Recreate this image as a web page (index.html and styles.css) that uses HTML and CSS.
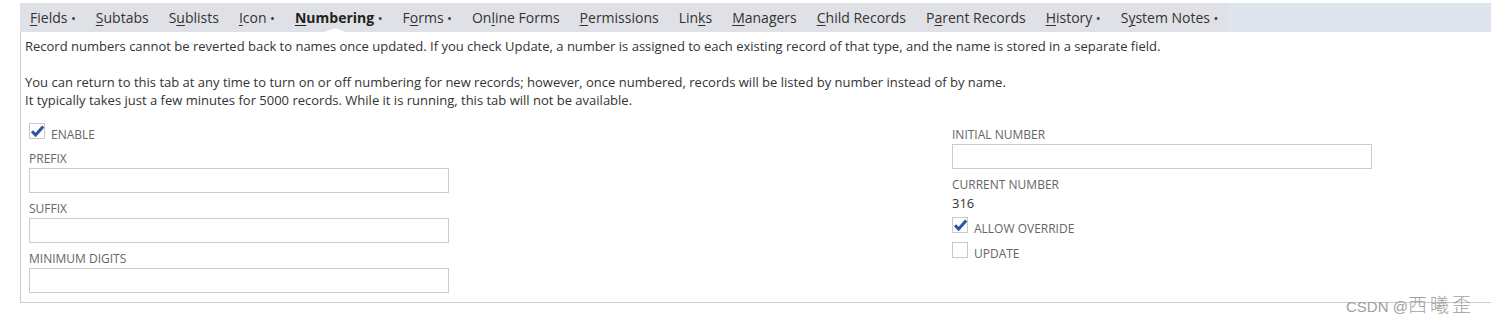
FILE: index.html
```html
<!DOCTYPE html>
<html>
<head>
<meta charset="utf-8">
<link rel="stylesheet" href="styles.css">
</head>
<body>
<div class="page">
  <div class="tabbar">
    <ul class="tabs">
      <li class="tab"><u>F</u>ields<span class="dot">•</span></li>
      <li class="tab"><u>S</u>ubtabs</li>
      <li class="tab">S<u>u</u>blists</li>
      <li class="tab"><u>I</u>con<span class="dot">•</span></li>
      <li class="tab active"><u>N</u>umbering<span class="dot">•</span></li>
      <li class="tab">F<u>o</u>rms<span class="dot">•</span></li>
      <li class="tab">On<u>l</u>ine Forms</li>
      <li class="tab"><u>P</u>ermissions</li>
      <li class="tab">Lin<u>k</u>s</li>
      <li class="tab"><u>M</u>anagers</li>
      <li class="tab"><u>C</u>hild Records</li>
      <li class="tab">P<u>a</u>rent Records</li>
      <li class="tab"><u>H</u>istory<span class="dot">•</span></li>
      <li class="tab">S<u>y</u>stem Notes<span class="dot">•</span></li>
    </ul>
  </div>
  <div class="panel">
    <p class="info">Record numbers cannot be reverted back to names once updated. If you check Update, a number is assigned to each existing record of that type, and the name is stored in a separate field.<br><br>You can return to this tab at any time to turn on or off numbering for new records; however, once numbered, records will be listed by number instead of by name.<br>It typically takes just a few minutes for 5000 records. While it is running, this tab will not be available.</p>
    <div class="form">
      <div class="col left">
        <div class="check-row enable">
          <span class="box checked"><svg viewBox="0 0 16 16" width="16" height="16"><path d="M3 8.3 L6.6 12 L14.2 3.6" fill="none" stroke="#28579c" stroke-width="3" stroke-linejoin="miter" stroke-linecap="butt"/></svg></span>
          <span class="label">Enable</span>
        </div>
        <div class="field">
          <div class="label">Prefix</div>
          <div class="input"></div>
        </div>
        <div class="field">
          <div class="label">Suffix</div>
          <div class="input"></div>
        </div>
        <div class="field">
          <div class="label">Minimum Digits</div>
          <div class="input"></div>
        </div>
      </div>
      <div class="col right">
        <div class="field first">
          <div class="label">Initial Number</div>
          <div class="input"></div>
        </div>
        <div class="field">
          <div class="label">Current Number</div>
          <div class="value">316</div>
        </div>
        <div class="check-row override">
          <span class="box checked"><svg viewBox="0 0 16 16" width="16" height="16"><path d="M3 8.3 L6.6 12 L14.2 3.6" fill="none" stroke="#28579c" stroke-width="3" stroke-linejoin="miter" stroke-linecap="butt"/></svg></span>
          <span class="label">Allow Override</span>
        </div>
        <div class="check-row update">
          <span class="box"></span>
          <span class="label">Update</span>
        </div>
      </div>
    </div>
  </div>
  <div class="watermark">CSDN @<span class="cjk">西曦歪</span></div>
</div>
</body>
</html>
```

FILE: styles.css
```css
html, body {
  margin: 0;
  padding: 0;
  background: #ffffff;
}

body {
  font-family: "Open Sans", "Noto Sans", sans-serif;
  color: #333333;
  min-height: 325px;
  overflow-x: hidden;
}

.page {
  position: relative;
  padding: 3px 0 0 20px;
  width: 1471px;
  min-height: 322px;
}

.tabbar {
  display: flex;
  height: 29px;
  background: #dfe5ee;
}

.tabs {
  display: flex;
  margin: 0;
  padding: 0;
  list-style: none;
  background: #dfe1e6;
}

.tab {
  position: relative;
  padding: 0 10px;
  line-height: 29px;
  font-size: 14px;
  color: #333333;
  white-space: nowrap;
}

.tab u {
  text-decoration-thickness: 1px;
  text-underline-offset: 2px;
}

.tab .dot {
  margin-left: 3.5px;
  font-size: 13px;
  font-weight: 400;
  color: #3a3a3a;
}

.tab.active {
  font-weight: 700;
  color: #222;
}

.tab.active::after {
  content: "";
  position: absolute;
  left: 50%;
  bottom: 0;
  margin-left: -15px;
  border-left: 11px solid transparent;
  border-right: 11px solid transparent;
  border-bottom: 4px solid #ffffff;
}

.panel {
  border-left: 1px solid #cccccc;
  border-bottom: 1px solid #cccccc;
  padding: 5px 0 9px 4px;
}

.info {
  margin: 0;
  font-size: 13px;
  line-height: 18px;
  color: #333333;
}

.form {
  display: grid;
  grid-template-columns: 923px 1fr;
  margin-top: 14px;
  padding-left: 4px;
}

.label {
  font-size: 12px;
  line-height: 16px;
  color: #666666;
  text-transform: uppercase;
}

.check-row {
  display: flex;
  align-items: flex-end;
  height: 16px;
}

.check-row .label {
  margin-left: 6px;
  line-height: 14px;
  position: relative;
  top: 3px;
}

.box {
  width: 14px;
  height: 14px;
  border: 1px solid #c9c9c9;
  background: #fff;
  position: relative;
  flex: none;
}

.box svg {
  position: absolute;
  left: -1px;
  top: -1px;
}

.enable {
  margin-bottom: 12px;
}

.field .label {
  margin-bottom: 1px;
}

.input {
  width: 418px;
  height: 23px;
  border: 1px solid #cccccc;
  background: #fff;
}

.left .field + .field {
  margin-top: 8px;
}

.right .field.first {
  margin-top: 4px;
}

.right .field + .field {
  margin-top: 8px;
}

.value {
  font-size: 13px;
  line-height: 18px;
  color: #333333;
}

.override {
  margin-top: 5px;
}

.update {
  margin-top: 9px;
}

.watermark {
  position: absolute;
  left: 1346px;
  top: 294px;
  font-family: "Liberation Sans", "Noto Sans CJK SC", sans-serif;
  font-size: 15px;
  line-height: 20px;
  color: #a0a0a0;
  white-space: nowrap;
}

.watermark .cjk {
  font-family: "Noto Sans CJK SC", sans-serif;
  font-size: 19px;
  font-weight: 300;
  letter-spacing: 3px;
}
```
